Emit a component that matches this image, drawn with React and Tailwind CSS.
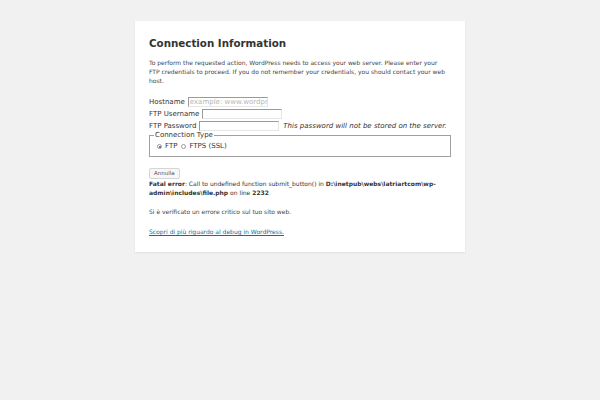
import React from "react";

const Radio = ({ checked, className = "" }) => (
  <span
    className={`inline-flex items-center justify-center w-[5px] h-[5px] rounded-full border border-[#9a9a9a] bg-white ${className}`}
  >
    {checked && <span className="w-[2px] h-[2px] rounded-full bg-[#555]" />}
  </span>
);

const Field = ({ label, placeholder, note }) => (
  <div className="flex items-center h-[12px] gap-[3px]">
    <span className="text-[7px] text-[#333]">{label}</span>
    <input
      type="text"
      readOnly
      placeholder={placeholder}
      className="w-[80px] h-[10px] border-t border-l border-t-[#9a9a9a] border-l-[#9a9a9a] border-b border-r border-b-[#e6e6e6] border-r-[#e6e6e6] text-[7px] leading-[9px] placeholder:text-[#b5b5b5] pl-[1px] outline-none"
    />
    {note && (
      <span className="ml-[1px] text-[7px] italic text-[#333]">{note}</span>
    )}
  </div>
);

export default function App() {
  return (
    <div
      className="w-[600px] h-[400px] bg-[#f1f1f1] pt-[21px]"
      style={{ fontFamily: '"DejaVu Sans", sans-serif' }}
    >
      <div className="mx-auto w-[330px] h-[231px] bg-white px-[14px] pt-[17px] shadow-[0_1px_2px_rgba(0,0,0,0.08)] text-[#444]">
        <h2 className="text-[10.3px] leading-none font-bold text-[#333]">
          Connection Information
        </h2>
        <p className="mt-[10px] text-[6px] leading-[9px] pr-[3px]">
          To perform the requested action, WordPress needs to access your web
          server. Please enter your FTP credentials to proceed. If you do not
          remember your credentials, you should contact your web host.
        </p>
        <div className="mt-[11px]">
          <Field label="Hostname" placeholder="example: www.wordpress.org" />
          <Field label="FTP Username" />
          <Field
            label="FTP Password"
            note="This password will not be stored on the server."
          />
        </div>
        <fieldset className="w-[302px] h-[25px] border border-[#a0a0a0] px-[4px]">
          <legend className="text-[7px] leading-[7px] text-[#333] px-[1px]">
            Connection Type
          </legend>
          <div className="flex items-center gap-[3px] pl-[3px] text-[7px] text-[#333] mt-[2px]">
            <Radio checked />
            <span>FTP</span>
            <Radio className="ml-[1px]" />
            <span>FTPS (SSL)</span>
          </div>
        </fieldset>
        <button className="block mt-[11px] h-[11px] px-[4px] bg-[#f7f7f7] border border-[#d5d5d5] rounded-[2px] text-[5.5px] leading-none text-[#555]">
          Annulla
        </button>
        <p className="text-[6px] leading-[9px] text-[#333] pr-[14px]">
          <b>Fatal error</b>: Call to undefined function submit_button() in{" "}
          <b>D:\inetpub\webs\latriartcom\wp-admin\includes\file.php</b> on line{" "}
          <b>2232</b>
        </p>
        <p className="mt-[10px] text-[6px] leading-[9px]">
          Si è verificato un errore critico sul tuo sito web.
        </p>
        <p className="mt-[11px] text-[6px] leading-[9px]">
          <a href="#" className="text-[#0073aa] underline">
            Scopri di più riguardo al debug in WordPress.
          </a>
        </p>
      </div>
    </div>
  );
}
